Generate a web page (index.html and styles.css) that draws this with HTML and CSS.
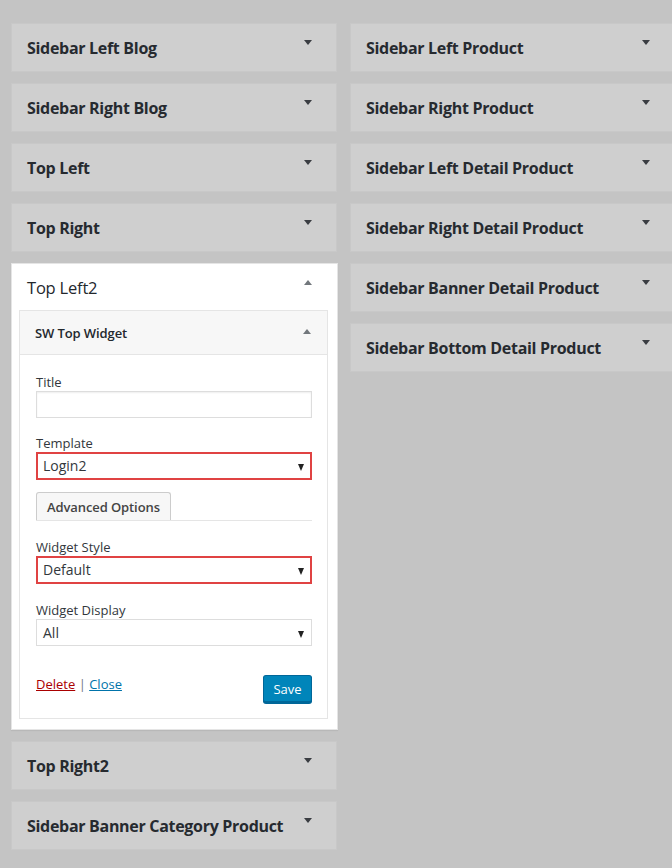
FILE: index.html
```html
<!DOCTYPE html>
<html lang="en">
<head>
    <title>Widgets</title>
    <meta name="viewport" content="width=device-width, initial-scale=1.0">
    <link rel="stylesheet" href="styles.css">
</head>
<body>
    <div class="columns">
        <div class="col col-left">
            <div class="sidebar"><h2>Sidebar Left Blog</h2><span class="arrow down"></span></div>
            <div class="sidebar"><h2>Sidebar Right Blog</h2><span class="arrow down"></span></div>
            <div class="sidebar"><h2>Top Left</h2><span class="arrow down"></span></div>
            <div class="sidebar"><h2>Top Right</h2><span class="arrow down"></span></div>
            <div class="sidebar open">
                <div class="open-head"><h2>Top Left2</h2><span class="arrow up"></span></div>
                <div class="widget">
                    <div class="widget-top"><h3>SW Top Widget</h3><span class="arrow up small"></span></div>
                    <div class="widget-inside">
                        <label class="lbl">Title</label>
                        <input class="field" type="text">
                        <label class="lbl">Template</label>
                        <div class="sel marked">Login2<span class="caret"></span></div>
                        <div class="adv"><button class="btn">Advanced Options</button></div>
                        <label class="lbl">Widget Style</label>
                        <div class="sel marked">Default<span class="caret"></span></div>
                        <label class="lbl">Widget Display</label>
                        <div class="sel last">All<span class="caret"></span></div>
                        <div class="actions">
                            <div class="links"><a href="#" class="del">Delete</a> | <a href="#" class="close">Close</a></div>
                            <button class="save">Save</button>
                        </div>
                    </div>
                </div>
            </div>
            <div class="sidebar"><h2>Top Right2</h2><span class="arrow down"></span></div>
            <div class="sidebar"><h2>Sidebar Banner Category Product</h2><span class="arrow down"></span></div>
        </div>
        <div class="col col-right">
            <div class="sidebar"><h2>Sidebar Left Product</h2><span class="arrow down"></span></div>
            <div class="sidebar"><h2>Sidebar Right Product</h2><span class="arrow down"></span></div>
            <div class="sidebar"><h2>Sidebar Left Detail Product</h2><span class="arrow down"></span></div>
            <div class="sidebar"><h2>Sidebar Right Detail Product</h2><span class="arrow down"></span></div>
            <div class="sidebar"><h2>Sidebar Banner Detail Product</h2><span class="arrow down"></span></div>
            <div class="sidebar"><h2>Sidebar Bottom Detail Product</h2><span class="arrow down"></span></div>
        </div>
    </div>
</body>
</html>
```

FILE: styles.css
```css
*{
    margin:0;
    padding:0;
    box-sizing:border-box;
}
body{
    width:672px;
    height:868px;
    overflow:hidden;
    background-color:#c4c4c4;
    font-family:"Open Sans", "Noto Sans", sans-serif;
    color:#23282d;
}
.columns{
    display:flex;
    gap:12px;
    padding:23px 0 0 11px;
}
.col-left{ width:327px; flex:none; }
.col-right{ width:340px; flex:none; }
.sidebar{
    position:relative;
    height:49px;
    margin-bottom:11px;
    background-color:#cfcfcf;
    border:1px solid #c8c8c8;
    display:flex;
    align-items:center;
    padding:0 15px;
}
.col-left > .sidebar:not(.open){ width:326px; }
.sidebar h2{
    font-size:16px;
    font-weight:700;
    letter-spacing:-0.3px;
    flex:1;
    color:#262a2f;
    padding-top:1px;
}
.arrow{
    width:0;
    height:0;
    border-left:4px solid transparent;
    border-right:4px solid transparent;
    margin-right:9px;
}
.arrow.down{
    border-top:5px solid #3a3d42;
    align-self:flex-start;
    margin-top:16px;
}
.arrow.up{
    border-bottom:5px solid #72777c;
}
.col-right .arrow.down{ margin-right:24px; }
/* open sidebar */
.sidebar.open{
    height:auto;
    display:block;
    padding:0 0 10px 0;
    background-color:#fff;
    border:1px solid #e5e5e5;
    box-shadow:0 1px 1px rgba(0,0,0,0.06);
    width:327px;
}
.open-head{
    height:46px;
    display:flex;
    align-items:center;
    padding:0 15px;
}
.open-head h2{
    font-weight:400;
    font-size:16.5px;
    letter-spacing:-0.2px;
    color:#23282d;
}
.open-head .arrow.up{ margin-right:10px; margin-top:-10px; }
.widget{
    margin:0 9px 0 7px;
    border:1px solid #e5e5e5;
}
.widget-top{
    height:44px;
    background-color:#f7f7f7;
    border-bottom:1px solid #e5e5e5;
    display:flex;
    align-items:center;
    padding:0 15px;
}
.widget-top h3{
    flex:1;
    font-size:13px;
    font-weight:600;
    color:#23282d;
    letter-spacing:-0.1px;
}
.widget-top .arrow.up{ margin-right:1px; margin-top:-3px; }
.widget-inside{
    padding:16px 15px 15px 16px;
    display:flex;
    flex-direction:column;
}
.lbl{
    font-size:13px;
    color:#32373c;
    line-height:18px;
    margin-top:2px;
}
.field{
    height:27px;
    border:1px solid #ddd;
    box-shadow:inset 0 1px 2px rgba(0,0,0,0.07);
    margin-bottom:14px;
}
.sel{
    position:relative;
    height:27px;
    border:1px solid #ddd;
    font-size:14px;
    line-height:25px;
    padding-left:6px;
    margin-bottom:15px;
    color:#32373c;
}
.sel.marked{
    border:2px solid #e04343;
    line-height:23px;
    height:28px;
    padding-left:5px;
}
.sel.last{ margin-bottom:0; }
.caret{
    position:absolute;
    right:7px;
    top:11px;
    width:0;
    height:0;
    border-left:3.5px solid transparent;
    border-right:3.5px solid transparent;
    border-top:7px solid #222;
}
.sel.marked .caret{ right:6px; top:10px; }
.adv{
    border-bottom:1px solid #e5e5e5;
    margin-top:-3px;
    margin-bottom:15px;
}
.btn{
    font-family:inherit;
    font-size:13px;
    font-weight:600;
    color:#444;
    background:#f7f7f7;
    border:1px solid #ccc;
    border-bottom:none;
    border-radius:3px 3px 0 0;
    height:28px;
    padding:0 10px;
    letter-spacing:-0.1px;
}
.actions{
    display:flex;
    justify-content:space-between;
    align-items:flex-start;
    margin-top:23px;
}
.links{
    font-size:13px;
    color:#72777c;
    margin-top:6px;
}
.links a{ text-decoration:underline; }
.del{ color:#a00; }
.close{ color:#0073aa; }
.save{
    font-family:inherit;
    font-size:13px;
    color:#fff;
    background:#0085ba;
    border:1px solid #006799;
    border-bottom-width:2px;
    box-shadow:0 1px 0 #006799;
    border-radius:3px;
    height:28px;
    width:49px;
    margin-top:6px;
}
```
